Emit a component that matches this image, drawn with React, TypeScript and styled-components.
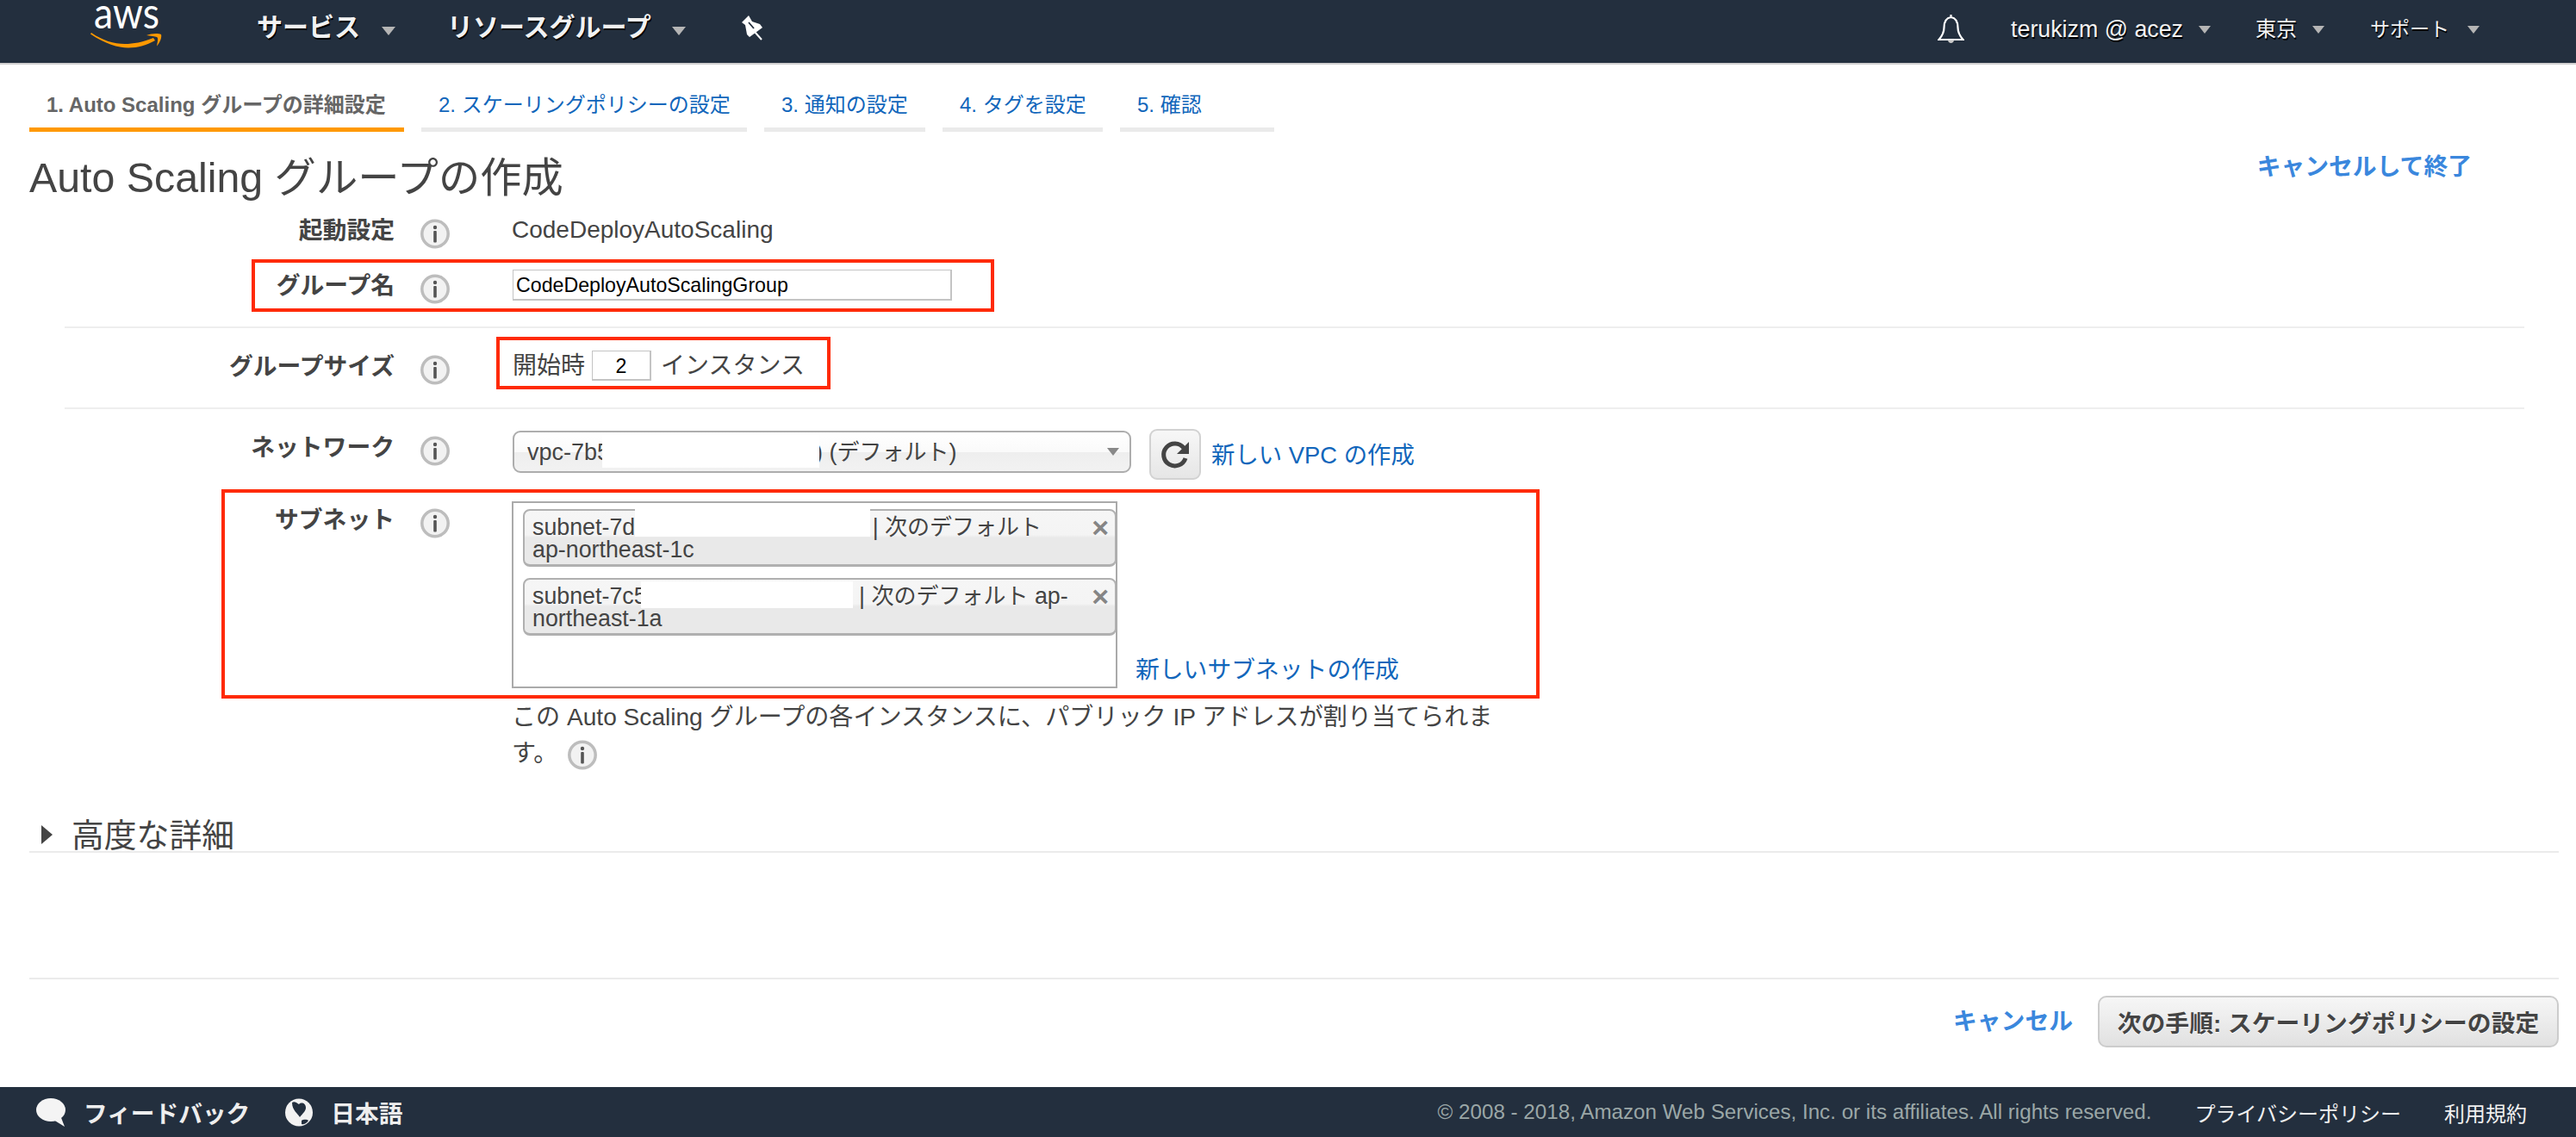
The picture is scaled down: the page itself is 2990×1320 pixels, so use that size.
import React from "react";
import styled, { createGlobalStyle } from "styled-components";

const Global = createGlobalStyle`
  html, body { margin: 0; padding: 0; background: #fff; }
  body { font-family: "Liberation Sans", "Noto Sans CJK JP", sans-serif; color: #444; }
  * { box-sizing: border-box; }
`;

const Page = styled.div`
  width: 2990px;
  height: 1320px;
  display: flex;
  flex-direction: column;
  overflow: hidden;
`;

const Header = styled.header`
  height: 75px;
  flex: none;
  background: #232f3e;
  border-bottom: 2px solid #cfcfcf;
  display: flex;
  align-items: center;
  padding: 0 112px 0 105px;
  color: #f2f2f2;
`;

const Logo = styled.div`
  width: 84px;
  height: 73px;
  margin-right: 109px;
  flex: none;
  svg { display: block; }
`;

const LogoWord = styled.text`
  font-family: Lato, "Liberation Sans", sans-serif;
  font-size: 50px;
  fill: #fff;
`;

const NavItem = styled.div<{ $gap: number; $after: number; $size: number; $bold?: boolean; $up: number }>`
  display: flex;
  align-items: center;
  gap: ${(p) => p.$gap}px;
  margin-right: ${(p) => p.$after}px;
  margin-bottom: ${(p) => p.$up}px;
  font-size: ${(p) => p.$size}px;
  font-weight: ${(p) => (p.$bold ? 700 : 400)};
  line-height: 40px;
  white-space: nowrap;
  text-shadow: 1px 2px 0 #000;
`;

const Caret = styled.i<{ $w: number; $h: number; $color?: string; $dy?: number }>`
  display: block;
  flex: none;
  width: 0;
  height: 0;
  margin-top: ${(p) => p.$dy ?? 0}px;
  border-left: ${(p) => p.$w / 2}px solid transparent;
  border-right: ${(p) => p.$w / 2}px solid transparent;
  border-top: ${(p) => p.$h}px solid ${(p) => p.$color ?? "#b5b5b5"};
`;

const PinSlot = styled.div`
  width: 26px;
  height: 29px;
  margin-bottom: 9px;
  svg { display: block; }
`;

const HeaderRight = styled.div`
  margin-left: auto;
  display: flex;
  align-items: center;
`;

const BellSlot = styled.div`
  width: 31px;
  height: 36px;
  margin-right: 54px;
  margin-bottom: 5px;
`;

const Tabs = styled.nav`
  display: flex;
  gap: 20px;
  margin-top: 25px;
  padding-left: 34px;
  flex: none;
`;

const Tab = styled.div<{ $w: number; $active?: boolean }>`
  width: ${(p) => p.$w}px;
  height: 53px;
  padding: 0 0 5px 20px;
  line-height: 44px;
  font-size: 24px;
  white-space: nowrap;
  font-weight: ${(p) => (p.$active ? 700 : 400)};
  color: ${(p) => (p.$active ? "#666" : "#1166bb")};
  border-bottom: 5px solid ${(p) => (p.$active ? "#ff9900" : "#eaeaea")};
`;

const TitleRow = styled.div`
  height: 95px;
  flex: none;
  display: flex;
  justify-content: space-between;
  align-items: flex-start;
  padding: 0 121px 0 34px;
`;

const Title = styled.h1`
  margin: 23px 0 0;
  font-size: 48.3px;
  line-height: 60px;
  font-weight: 400;
  color: #444;
  white-space: nowrap;
`;

const StrongLink = styled.a`
  font-size: 27.8px;
  line-height: 38px;
  font-weight: 700;
  color: #3a87dd;
  white-space: nowrap;
`;

const ExitLink = styled(StrongLink)`
  margin-top: 22px;
`;

const Form = styled.div`
  padding: 0 60px 0 75px;
  flex: none;
`;

const Group = styled.div`
  padding-bottom: 29px;
  border-bottom: 2px solid #eeeeee;
`;

const Row = styled.div<{ $mt?: number }>`
  position: relative;
  display: grid;
  grid-template-columns: 383px 136px 1fr;
  align-items: start;
  margin-top: ${(p) => p.$mt ?? 0}px;
  min-height: 38px;
`;

const Label = styled.div`
  font-size: 27.8px;
  line-height: 40px;
  margin-bottom: -2px;
  font-weight: 700;
  color: #444;
  text-align: right;
  white-space: nowrap;
`;

const InfoWrap = styled.span<{ $inline?: boolean }>`
  display: ${(p) => (p.$inline ? "inline-block" : "block")};
  width: 34px;
  height: 35px;
  margin: ${(p) => (p.$inline ? "0 0 0 12px" : "6px 0 -3px 30px")};
  vertical-align: -10px;
`;

const Value = styled.div`
  font-size: 28px;
  line-height: 38px;
  color: #444;
  white-space: nowrap;
`;

const NameInput = styled.input`
  display: block;
  width: 510px;
  height: 36px;
  margin: 1px 0 0 1px;
  padding: 2px 0 0 3px;
  border: 2px solid #c4c4c4;
  border-width: 1px 2px 2px 1px;
  background: #fff;
  font: 23.2px "Liberation Sans", sans-serif;
  color: #000;
  outline: none;
`;

const SizeLine = styled.div`
  display: flex;
  align-items: flex-start;
  font-size: 28px;
  line-height: 38px;
  color: #444;
  padding-left: 1px;
`;

const SizeInput = styled.input`
  width: 69px;
  height: 35px;
  margin: 1px 11px 0 8px;
  padding: 2px 0 0;
  text-align: center;
  border: 1px solid #c4c4c4;
  border-width: 1px 2px 2px 1px;
  font: 23.2px "Liberation Sans", sans-serif;
  color: #000;
  outline: none;
`;

const NetworkLine = styled.div`
  display: flex;
  align-items: flex-start;
`;

const Select = styled.div`
  width: 718px;
  height: 49px;
  margin-left: 1px;
  padding: 0 12px 0 15px;
  display: flex;
  align-items: center;
  justify-content: space-between;
  border: 2px solid #adadad;
  border-radius: 9px;
  background: linear-gradient(#ffffff 0%, #fafafa 50%, #eeeeee 52%, #f2f2f2 100%);
  font-size: 27px;
  line-height: 38px;
  color: #444;
  white-space: nowrap;
`;

const SelectText = styled.span`
  display: flex;
  align-items: center;
  white-space: pre;
`;

const Mask = styled.span<{ $w: number; $top: number; $h: number; $ml?: number; $mr?: number }>`
  position: relative;
  display: inline-block;
  width: ${(p) => p.$w}px;
  margin-left: ${(p) => p.$ml ?? 0}px;
  margin-right: ${(p) => p.$mr ?? 0}px;
  &::before {
    content: "";
    position: absolute;
    left: 0;
    right: 0;
    top: ${(p) => p.$top}px;
    height: ${(p) => p.$h}px;
    background: #fff;
  }
`;

const Kana = styled.span`
  font-size: 26px;
`;

const RefreshButton = styled.button`
  width: 60px;
  height: 59px;
  margin: -2px 12px 0 21px;
  padding: 0;
  border: 2px solid #d2d2d2;
  border-radius: 9px;
  background: linear-gradient(#f7f7f7, #e6e6e6);
  display: flex;
  align-items: center;
  justify-content: center;
`;

const BlueLink = styled.a<{ $mt?: number }>`
  font-size: 27.4px;
  line-height: 38px;
  color: #1166bb;
  white-space: nowrap;
  margin-top: ${(p) => p.$mt ?? 0}px;
`;

const SubnetLine = styled.div`
  display: flex;
  align-items: flex-end;
  margin-top: -2px;
`;

const MultiBox = styled.div`
  width: 703px;
  height: 217px;
  padding: 7px 0 0 11px;
  border: 2px solid #aaaaaa;
  background: #fff;
  display: flex;
  flex-direction: column;
  gap: 13px;
`;

const Chip = styled.div`
  position: relative;
  width: 689px;
  height: 67px;
  padding: 6px 0 0 9px;
  border: 2px solid #b0b0b0;
  border-bottom-width: 3px;
  border-radius: 8px;
  background: linear-gradient(#f6f6f6 0%, #f4f4f4 45%, #e9e9e9 50%, #e9e9e9 100%);
  font-size: 26.8px;
  line-height: 26px;
  color: #444;
  white-space: nowrap;
`;

const ChipClose = styled.span`
  position: absolute;
  right: 7px;
  top: 5px;
  font-size: 34px;
  line-height: 28px;
  font-weight: 700;
  color: #858585;
`;

const SubnetLink = styled(BlueLink)`
  margin: 0 0 2px 21px;
  font-size: 27.8px;
`;

const Help = styled.div`
  margin-top: 13px;
  font-size: 28.1px;
  line-height: 42px;
  color: #444;
  white-space: nowrap;
`;

const RedBox = styled.div<{ $l: number; $t: number; $w: number; $h: number }>`
  position: absolute;
  left: ${(p) => p.$l}px;
  top: ${(p) => p.$t}px;
  width: ${(p) => p.$w}px;
  height: ${(p) => p.$h}px;
  border: 4.5px solid #ff2a06;
  pointer-events: none;
`;

const Advanced = styled.div`
  margin: 56px 20px 0 34px;
  height: 38px;
  flex: none;
  border-bottom: 2px solid #ebebeb;
  display: flex;
  align-items: flex-start;
`;

const AdvancedArrow = styled.i`
  display: block;
  width: 0;
  height: 0;
  margin: 6px 22px 0 14px;
  border-left: 13px solid #444;
  border-top: 11px solid transparent;
  border-bottom: 11px solid transparent;
`;

const AdvancedText = styled.span`
  font-size: 37.8px;
  line-height: 36px;
  color: #444;
`;

const Actions = styled.div`
  margin: 145px 20px 0 34px;
  flex: none;
  border-top: 2px solid #ebebeb;
  padding-top: 19px;
  display: flex;
  justify-content: flex-end;
  align-items: center;
  gap: 29px;
`;

const NextButton = styled.button`
  width: 535px;
  height: 60px;
  padding: 0;
  border: 2px solid #cccccc;
  border-radius: 10px;
  background: linear-gradient(#f6f6f6, #e1e1e1);
  font: 700 27.8px "Liberation Sans", "Noto Sans CJK JP", sans-serif;
  color: #444;
  text-shadow: 0 1px 0 #fff;
  white-space: nowrap;
`;

const Footer = styled.footer`
  margin-top: auto;
  height: 58px;
  flex: none;
  background: #232f3e;
  display: flex;
  align-items: center;
  padding: 0 57px 0 42px;
`;

const FooterItem = styled.div<{ $after: number }>`
  display: flex;
  align-items: center;
  gap: 21px;
  margin-right: ${(p) => p.$after}px;
  font-size: 27.7px;
  font-weight: 700;
  color: #eeeeee;
  white-space: nowrap;
`;

const FooterRight = styled.div`
  margin-left: auto;
  display: flex;
  align-items: center;
  gap: 50px;
  font-size: 24px;
  color: #f0f0f0;
  white-space: nowrap;
`;

const Copyright = styled.span`
  font-size: 24.2px;
  color: #9ba7a7;
`;

const InfoIcon = ({ inline }: { inline?: boolean }) => (
  <InfoWrap $inline={inline}>
    <svg width="34" height="35" viewBox="0 0 34 35">
      <circle cx="17" cy="17.500" r="15.200" fill="#f2f2f2" stroke="#bdbdbd" strokeWidth="3.500" />
      <circle cx="17" cy="10" r="2.200" fill="#555" />
      <rect x="15.200" y="14" width="3.600" height="13.500" rx="1" fill="#555" />
    </svg>
  </InfoWrap>
);

const LogoMark = () => (
  <svg width="84" height="58" viewBox="0 0 84 58">
    <LogoWord x="42" y="33" textAnchor="middle" textLength="76" lengthAdjust="spacingAndGlyphs">aws</LogoWord>
    <g transform="translate(0 38)">
      <path fill="#ff9900" d="M1 0C14 9 27 13 40 13C50 13 60 11 73 6L75 9C66 14 55 17.500 44 17.500C32 17.500 17 13 0 1.500Z" />
      <path fill="#ff9900" d="M65 3C70 1 78 0 82 2C83 5 81 11 77 15.500C78 10 79 6 77 5C75 4 70 4 65 3Z" />
    </g>
  </svg>
);

const Pin = () => (
  <svg width="26" height="29" viewBox="0 0 26 29">
    <path d="M8 0L0 8L4 11L6 22L9 25L24 14L21 10L12 7Z" fill="#fff" />
    <path d="M15 19L23 28" stroke="#fff" strokeWidth="2" />
    <path d="M8 8L14 15" stroke="#232f3e" strokeWidth="1.800" />
  </svg>
);

const Bell = () => (
  <svg width="31" height="36" viewBox="0 0 31 36" fill="none">
    <path d="M15.500 1V4C9 5 7.500 10 7.500 16C7.500 22 5 26 1.500 30H29.500C26 26 23.500 22 23.500 16C23.500 10 22 5 15.500 4" stroke="#fff" strokeWidth="2.200" />
    <path d="M12 30.500C12 35 19 35 19 30.500Z" fill="#c9c9c9" />
  </svg>
);

const RefreshIcon = () => (
  <svg width="36" height="36" viewBox="0 0 36 36" fill="none">
    <path d="M28 10A13 13 0 1 0 30 22" stroke="#444" strokeWidth="5" />
    <path d="M34 3V17H20Z" fill="#444" />
  </svg>
);

const Bubble = () => (
  <svg width="34" height="33" viewBox="0 0 34 33">
    <ellipse cx="17" cy="13.500" rx="17" ry="13.500" fill="#f4f4f4" />
    <path d="M20 25L33 33L28 20Z" fill="#f4f4f4" />
  </svg>
);

const Globe = () => (
  <svg width="32" height="33" viewBox="0 0 32 33">
    <circle cx="16" cy="16.500" r="16" fill="#f2f2f2" />
    <path d="M8 5C11 3 14 6 16 7C19 4 24 6 24 11C24 15 20 18 17 22C15 18 8 14 8 5Z" fill="#232f3e" />
    <path d="M19 26C22 24 26 25 27 26C24 30 21 31 19 30Z" fill="#232f3e" />
  </svg>
);

export default function App() {
  return (
    <Page>
      <Global />
      <Header>
        <Logo>
          <LogoMark />
        </Logo>
        <NavItem $gap={25} $after={60} $size={30} $bold $up={9}>
          サービス
          <Caret $w={16} $h={10} $dy={7} />
        </NavItem>
        <NavItem $gap={24} $after={65} $size={30} $bold $up={9}>
          リソースグループ
          <Caret $w={16} $h={10} $dy={7} />
        </NavItem>
        <PinSlot>
          <Pin />
        </PinSlot>
        <HeaderRight>
          <BellSlot>
            <Bell />
          </BellSlot>
          <NavItem $gap={18} $after={52} $size={26.800} $up={5}>
            terukizm @ acez
            <Caret $w={14} $h={9} />
          </NavItem>
          <NavItem $gap={18} $after={53} $size={24} $up={5}>
            東京
            <Caret $w={14} $h={9} />
          </NavItem>
          <NavItem $gap={21} $after={0} $size={23} $up={5}>
            サポート
            <Caret $w={14} $h={9} />
          </NavItem>
        </HeaderRight>
      </Header>

      <Tabs>
        <Tab $w={435} $active>1. Auto Scaling グループの詳細設定</Tab>
        <Tab $w={378}>2. スケーリングポリシーの設定</Tab>
        <Tab $w={187}>3. 通知の設定</Tab>
        <Tab $w={186}>4. タグを設定</Tab>
        <Tab $w={179}>5. 確認</Tab>
      </Tabs>

      <TitleRow>
        <Title>Auto Scaling グループの作成</Title>
        <ExitLink>キャンセルして終了</ExitLink>
      </TitleRow>

      <Form>
        <Group>
          <Row>
            <Label>起動設定</Label>
            <InfoIcon />
            <Value>CodeDeployAutoScaling</Value>
          </Row>
          <Row $mt={26}>
            <Label>グループ名</Label>
            <InfoIcon />
            <NameInput readOnly value="CodeDeployAutoScalingGroup" />
            <RedBox $l={217} $t={-11} $w={862} $h={61} />
          </Row>
        </Group>
        <Group>
          <Row $mt={25}>
            <Label>グループサイズ</Label>
            <InfoIcon />
            <SizeLine>
              開始時
              <SizeInput readOnly value="2" />
              インスタンス
            </SizeLine>
            <RedBox $l={501} $t={-15} $w={388} $h={61} />
          </Row>
        </Group>
        <Row $mt={25}>
          <Label>ネットワーク</Label>
          <InfoIcon />
          <NetworkLine>
            <Select>
              <SelectText>
                vpc-7b5
                <Mask $w={252} $top={-21} $h={39} $ml={-9} $mr={-5} />
                {") ("}
                <Kana>デフォルト</Kana>
                {")"}
              </SelectText>
              <Caret $w={15} $h={9} $color="#888" />
            </Select>
            <RefreshButton aria-label="更新">
              <RefreshIcon />
            </RefreshButton>
            <BlueLink $mt={10}>新しい VPC の作成</BlueLink>
          </NetworkLine>
        </Row>
        <Row $mt={27}>
          <Label>サブネット</Label>
          <InfoIcon />
          <div>
            <SubnetLine>
              <MultiBox>
                <Chip>
                  subnet-7d
                  <Mask $w={273} $top={-31} $h={33} $mr={-5} />
                  {" | "}
                  <Kana>次のデフォルト</Kana>
                  <br />
                  ap-northeast-1c
                  <ChipClose>×</ChipClose>
                </Chip>
                <Chip>
                  subnet-7c5
                  <Mask $w={246} $top={-26} $h={31} $ml={-7} $mr={0} />
                  {" | "}
                  <Kana>次のデフォルト</Kana>
                  {" ap-"}
                  <br />
                  northeast-1a
                  <ChipClose>×</ChipClose>
                </Chip>
              </MultiBox>
              <SubnetLink>新しいサブネットの作成</SubnetLink>
            </SubnetLine>
            <Help>
              この Auto Scaling グループの各インスタンスに、パブリック IP アドレスが割り当てられま
              <br />
              す。
              <InfoIcon inline />
            </Help>
          </div>
          <RedBox $l={182} $t={-16} $w={1530} $h={243} />
        </Row>
      </Form>

      <Advanced>
        <AdvancedArrow />
        <AdvancedText>高度な詳細</AdvancedText>
      </Advanced>

      <Actions>
        <StrongLink>キャンセル</StrongLink>
        <NextButton>次の手順: スケーリングポリシーの設定</NextButton>
      </Actions>

      <Footer>
        <FooterItem $after={41}>
          <Bubble />
          フィードバック
        </FooterItem>
        <FooterItem $after={0}>
          <Globe />
          日本語
        </FooterItem>
        <FooterRight>
          <Copyright>© 2008 - 2018, Amazon Web Services, Inc. or its affiliates. All rights reserved.</Copyright>
          <span>プライバシーポリシー</span>
          <span>利用規約</span>
        </FooterRight>
      </Footer>
    </Page>
  );
}
